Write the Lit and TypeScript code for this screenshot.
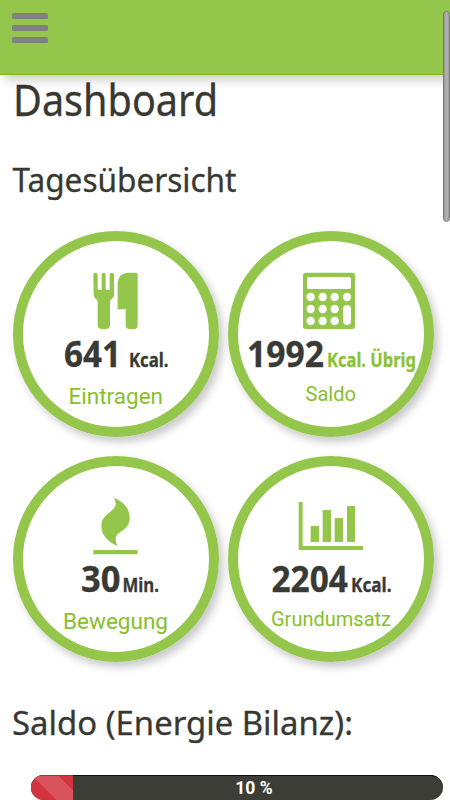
import { LitElement, html, svg, css, TemplateResult } from "lit";
import { customElement } from "lit/decorators.js";

interface Run {
  text: string;
  x: number;
  width: number;
  size: number;
  tone: string;
}

interface Tile {
  viewBox: string;
  icon: TemplateResult;
  value: Run[];
  label: Run;
  labelBase: number;
}

const dots = [
  [257, 231], [293, 231], [329, 231], [366, 231],
  [257, 267], [293, 267], [329, 267],
  [257, 303], [293, 303], [329, 303],
];

const tiles: Tile[] = [
  {
    viewBox: "228 150 240 180",
    icon: svg`
      <path d="M280 165q0-7 6.500-7t6.500 7v41q0 4 6 4t6-4v-41q0-7 6-7t6 7v41q0 4 6 4t6-4v-41q0-7 6.500-7t6.500 7v60q0 8-7 12q-5 3-5 8v70q0 12-12 12h-13q-12 0-12-12v-70q0-5-5-8q-7-4-7-12z"/>
      <path d="M353 267v-80q3-28 32-29h22q6 0 6 6v151q0 12-12 12h-12q-12 0-12-12v-48z"/>`,
    value: [
      { text: "641", x: 51, width: 57, size: 35, tone: "num" },
      { text: "Kcal.", x: 116, width: 39.5, size: 19, tone: "num" },
    ],
    label: { text: "Eintragen", x: 55.5, width: 94.5, size: 22.5, tone: "label" },
    labelBase: 23.5,
  },
  {
    viewBox: "198 150 240 180",
    icon: svg`
      <path d="M242 158h140q8 0 8 8v153q0 8-8 8h-140q-8 0-8-8v-153q0-8 8-8z"/>
      <rect class="hole" x="246" y="171" width="132" height="36" rx="5"/>
      ${dots.map(([x, y]) => svg`<circle class="hole" cx=${x} cy=${y} r="12.500"/>`)}
      <rect class="hole" x="354" y="255" width="24" height="60" rx="12"/>`,
    value: [
      { text: "1992", x: 19, width: 77, size: 35, tone: "num" },
      { text: "Kcal. Übrig", x: 99, width: 89, size: 19, tone: "num green" },
    ],
    label: { text: "Saldo", x: 77.5, width: 50.5, size: 21, tone: "label" },
    labelBase: 20.7,
  },
  {
    viewBox: "228 150 240 180",
    icon: svg`
      <path d="M342 158C368 169 389 187 389 219C389 259 348 257 347 282Q347 293 353 303C326 292 304 272 304 242C304 206 345 202 347 177Q347 167 342 158z"/>
      <rect x="280" y="315" width="133" height="13" rx="2"/>`,
    value: [
      { text: "30", x: 68, width: 39.5, size: 35, tone: "num" },
      { text: "Min.", x: 109.5, width: 36.5, size: 19, tone: "num" },
    ],
    label: { text: "Bewegung", x: 50, width: 105, size: 22.5, tone: "label" },
    labelBase: 23.5,
  },
  {
    viewBox: "198 150 240 180",
    icon: svg`
      <path d="M221 171h12v132h181v12h-193zM257 243h25v48h-25zM293 195h25v96h-25zM329 219h25v72h-25zM366 183h24v108h-24z"/>`,
    value: [
      { text: "2204", x: 43.5, width: 76.5, size: 35, tone: "num" },
      { text: "Kcal.", x: 123, width: 40.5, size: 19, tone: "num" },
    ],
    label: { text: "Grundumsatz", x: 43, width: 120, size: 21, tone: "label" },
    labelBase: 20.7,
  },
];

const fitted = (r: Run, y: number) => svg`<text class=${r.tone} x=${r.x} y=${y}
  font-size=${r.size} textLength=${r.width} lengthAdjust="spacingAndGlyphs">${r.text}</text>`;

@customElement("app-root")
export class AppRoot extends LitElement {
  static styles = css`
    :host {
      display: block;
      position: relative;
      height: 800px;
      overflow: hidden;
      background: #fff;
      font-family: Roboto, sans-serif;
    }
    svg { display: block; overflow: visible; }
    header {
      position: relative;
      z-index: 1;
      box-sizing: border-box;
      height: 75px;
      padding: 13px 12px;
      background: #93c64b;
      border-bottom: 1px solid #80bc0d;
      box-shadow: 5px 5px 10px rgba(0, 0, 0, 0.2);
    }
    .menu { display: flex; flex-direction: column; gap: 6px; width: 36px; }
    .bar { height: 6px; border-radius: 1.5px; background: #808080; }
    .heading { width: 450px; height: 45px; }
    .title { height: 50px; }
    .day { margin-top: 30px; }
    .balance { margin-top: 36px; }
    .heading text {
      font-family: "Noto Sans", sans-serif;
      fill: #373832;
      stroke: #373832;
      stroke-width: 0.3px;
    }
    .tiles {
      display: grid;
      grid-template-columns: 206px 206px;
      gap: 19px 9px;
      margin: 31px 0 0 13px;
    }
    .tile {
      box-sizing: border-box;
      width: 206px;
      height: 206px;
      border: 10px solid #93c64b;
      border-radius: 50%;
      padding-top: 29px;
      box-shadow: 4px 5px 9px rgba(0, 0, 0, 0.22);
    }
    .icon { width: 80px; height: 60px; margin: 0 auto; fill: #93c64b; }
    .hole { fill: #fff; }
    .value { width: 206px; height: 50px; margin-left: -10px; }
    .caption { width: 206px; height: 30px; margin-left: -10px; }
    .num {
      font-family: "Noto Sans", sans-serif;
      font-weight: 700;
      fill: #393a35;
      stroke: #393a35;
      stroke-width: 0.3px;
    }
    .green { fill: #8bc234; stroke: #8bc234; }
    .label { fill: #86c02b; }
    .progress {
      display: grid;
      height: 25px;
      margin: 32px 7px 0 31px;
      border-radius: 12.5px;
      overflow: hidden;
      background: #3d3d38;
      box-shadow: inset 0 1px 0 #11120e;
    }
    .fill {
      grid-area: 1 / 1;
      background: linear-gradient(45deg, #d1343f 51%, #d9545d 51% 77%, #d1343f 77%) 0 0 / 50px 50px no-repeat;
      box-shadow: inset 0 1px 0 #cb2430;
    }
    .percent {
      grid-area: 1 / 1;
      align-self: center;
      text-align: center;
      padding-left: 34px;
      color: #fff;
      font: 700 17.5px/24px Roboto, sans-serif;
    }
    .scroll {
      position: absolute;
      z-index: 2;
      top: 11px;
      right: 0;
      box-sizing: border-box;
      width: 7px;
      height: 211px;
      border: 1px solid #777;
      border-radius: 3.5px;
      background: linear-gradient(90deg, #999, #b5b5b5 60%, #999);
    }
  `;

  render() {
    const progress = 10.2;
    return html`
      <header>
        <div class="menu"><div class="bar"></div><div class="bar"></div><div class="bar"></div></div>
      </header>
      <svg class="heading title">${fitted({ text: "Dashboard", x: 13, width: 205, size: 43, tone: "" }, 40.5)}</svg>
      <svg class="heading day">${fitted({ text: "Tagesübersicht", x: 12.5, width: 224, size: 33, tone: "" }, 36.5)}</svg>
      <div class="tiles">
        ${tiles.map((t) => html`
          <section class="tile">
            <svg class="icon" viewBox=${t.viewBox}>${t.icon}</svg>
            <svg class="value">${t.value.map((r) => fitted(r, 36.5))}</svg>
            <svg class="caption">${fitted(t.label, t.labelBase)}</svg>
          </section>`)}
      </div>
      <svg class="heading balance">${fitted({ text: "Saldo (Energie Bilanz):", x: 12, width: 341, size: 33, tone: "" }, 37)}</svg>
      <div class="progress">
        <div class="fill" style="width:${progress}%"></div>
        <div class="percent">10 %</div>
      </div>
      <div class="scroll"></div>
    `;
  }
}
